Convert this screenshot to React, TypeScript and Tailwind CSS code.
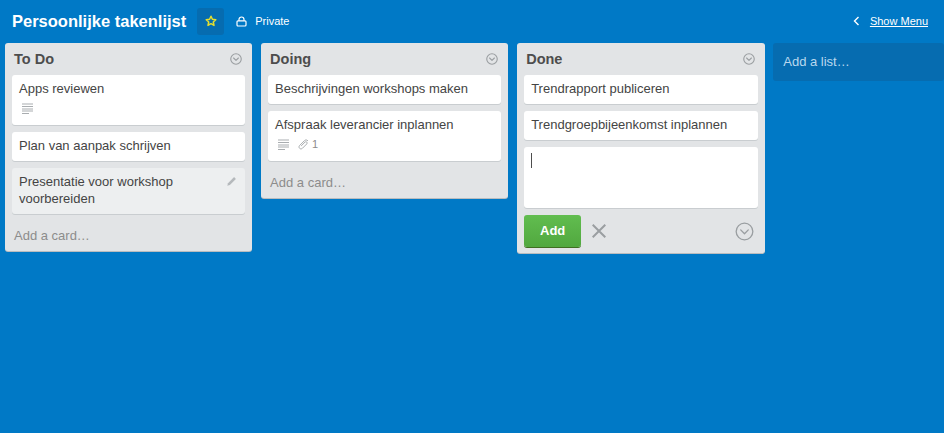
import React from "react";

const Chevron = ({ size = 12, sw = 1.2 }: { size?: number; sw?: number }) => (
  <svg width={size} height={size} viewBox="0 0 13 13" fill="none" stroke="#9a9ea1" strokeWidth={sw}>
    <circle cx="6.5" cy="6.5" r="5.7" />
    <path d="M3.9 5.4 6.5 8l2.6-2.6" strokeLinecap="round" strokeLinejoin="round" />
  </svg>
);

const Desc = () => (
  <svg width="11" height="11" viewBox="0 0 11 11" stroke="#a9adb0" strokeWidth="1" fill="none">
    <path d="M0 1h11M0 3.500h11M0 6h11M0 8h11M0 10.500h7" />
  </svg>
);

const Clip = () => (
  <svg width="11" height="11" viewBox="0 0 11 11" fill="none" stroke="#a9adb0" strokeWidth="1" strokeLinecap="round">
    <path d="M9.700 1.600c-1-1-2.300-.9-3.300.1L1.600 6.500c-.8.900-.8 2 0 2.800s1.900.8 2.800 0l4.400-4.400c.5-.6.500-1.300 0-1.800s-1.200-.5-1.800 0L3.400 6.700" />
  </svg>
);

const Card = ({
  title,
  hover,
  desc,
  attach,
}: {
  title: React.ReactNode;
  hover?: boolean;
  desc?: boolean;
  attach?: boolean;
}) => (
  <div
    className={`relative rounded-[3px] px-[7px] pt-[5px] pb-[7px] text-[13px] leading-[17px] text-[#444444] shadow-[0_1px_0_#c9cdd0] ${
      hover ? "bg-[#edeff0]" : "bg-white"
    }`}
  >
    <div>{title}</div>
    {(desc || attach) && (
      <div className="flex h-[21px] items-center gap-[9px] pl-[3px] pt-[1px]">
        {desc && <Desc />}
        {attach && (
          <span className="flex items-center gap-[3px] text-[11px] text-[#8c8c8c]">
            <Clip />1
          </span>
        )}
      </div>
    )}
    {hover && (
      <svg className="absolute right-[8px] top-[8px]" width="11" height="11" viewBox="0 0 12 12" fill="#b5b9bc">
        <path d="M8.800 1.200 10.800 3.200 4.200 9.800 1.400 10.600 2.200 7.800Z" />
      </svg>
    )}
  </div>
);

const Header = ({ title }: { title: string }) => (
  <div className="flex h-[32px] items-start justify-between pl-[9px] pr-[10px] pt-[7px]">
    <h2 className="text-[14.500px] font-bold leading-[18px] text-[#4d4d4d]">{title}</h2>
    <span className="mt-[3px] flex">
      <Chevron />
    </span>
  </div>
);

const AddCard = () => (
  <div className="pl-[9px] pt-[13px] pb-[7px] text-[13px] leading-[17px] text-[#8c8c8c]">Add a card…</div>
);

const List = ({ children }: { children: React.ReactNode }) => (
  <section className="w-[247.400px] flex-none rounded-[3px] bg-[#e2e4e6] shadow-[0_1px_0_#b9bcbf]">{children}</section>
);

const Cards = ({ children }: { children: React.ReactNode }) => (
  <div className="flex flex-col gap-[7px] px-[7px]">{children}</div>
);

export default function App() {
  return (
    <div
      className="h-[433px] w-[944px] overflow-hidden bg-[#0079c6] text-white"
      style={{ fontFamily: '"Liberation Sans", Arial, sans-serif' }}
    >
      <header className="flex h-[42px] items-center pl-[12px] pr-[16px]">
        <h1 className="text-[16.500px] font-bold leading-[22px]">Persoonlijke takenlijst</h1>
        <button className="ml-[11px] flex h-[27px] w-[27px] items-center justify-center rounded-[3px] bg-[#066cb0]">
          <svg width="12" height="12" viewBox="0 0 12 12" fill="none" stroke="#e6df2e" strokeWidth="1.500" strokeLinejoin="round">
            <path d="M6 1.200 7.400 4.300 10.800 4.700 8.300 7 9 10.400 6 8.700 3 10.400 3.700 7 1.200 4.700 4.600 4.300Z" />
          </svg>
        </button>
        <span className="ml-[12px] flex items-center gap-[8px] text-[11px]">
          <svg width="11" height="11" viewBox="0 0 11 11" fill="none" stroke="#fff" strokeWidth="1.200">
            <rect x="1" y="4.800" width="9" height="5.200" rx="1" />
            <path d="M3 4.800V3.500a2.500 2.500 0 0 1 5 0v1.300" />
          </svg>
          Private
        </span>
        <div className="ml-auto flex items-center gap-[10px] text-[11px]">
          <svg width="7" height="10" viewBox="0 0 7 10" fill="none" stroke="#fff" strokeWidth="1.400">
            <path d="M5.500 1 1.500 5l4 4" />
          </svg>
          <span className="underline">Show Menu</span>
        </div>
      </header>
      <main className="mt-[1px] flex items-start gap-[8.700px] pl-[5px]">
        <List>
          <Header title="To Do" />
          <Cards>
            <Card title="Apps reviewen" desc />
            <Card title="Plan van aanpak schrijven" />
            <Card hover title={<>Presentatie voor workshop<br />voorbereiden</>} />
          </Cards>
          <AddCard />
        </List>
        <List>
          <Header title="Doing" />
          <Cards>
            <Card title="Beschrijvingen workshops maken" />
            <Card title="Afspraak leverancier inplannen" desc attach />
          </Cards>
          <AddCard />
        </List>
        <List>
          <Header title="Done" />
          <Cards>
            <Card title="Trendrapport publiceren" />
            <Card title="Trendgroepbijeenkomst inplannen" />
            <div className="h-[61px] rounded-[3px] bg-white px-[7px] pt-[6px] shadow-[0_1px_0_#c9cdd0]">
              <div className="h-[15px] w-px bg-[#4d4d4d]" />
            </div>
          </Cards>
          <div className="flex items-center px-[7px] pt-[7px] pb-[6px]">
            <button className="h-[32px] w-[57px] rounded-[3px] bg-linear-to-b from-[#61bd4f] to-[#51a83f] text-[13px] font-bold text-white shadow-[0_1px_0_#3f6f21]">
              Add
            </button>
            <svg className="ml-[11px]" width="14" height="14" viewBox="0 0 14 14" stroke="#9a9ea1" strokeWidth="2" fill="none">
              <path d="M.7.700l12.600 12.600M13.300.7.700 13.300" />
            </svg>
            <span className="ml-auto mr-[4px] flex">
              <Chevron size={19} sw={0.9} />
            </span>
          </div>
        </List>
        <div className="h-[38px] w-[171px] flex-none rounded-[3px] bg-[#066cb0] pl-[10px] pt-[10px] text-[13px] leading-[17px] text-[#b9d8ee]">
          Add a list…
        </div>
      </main>
    </div>
  );
}
